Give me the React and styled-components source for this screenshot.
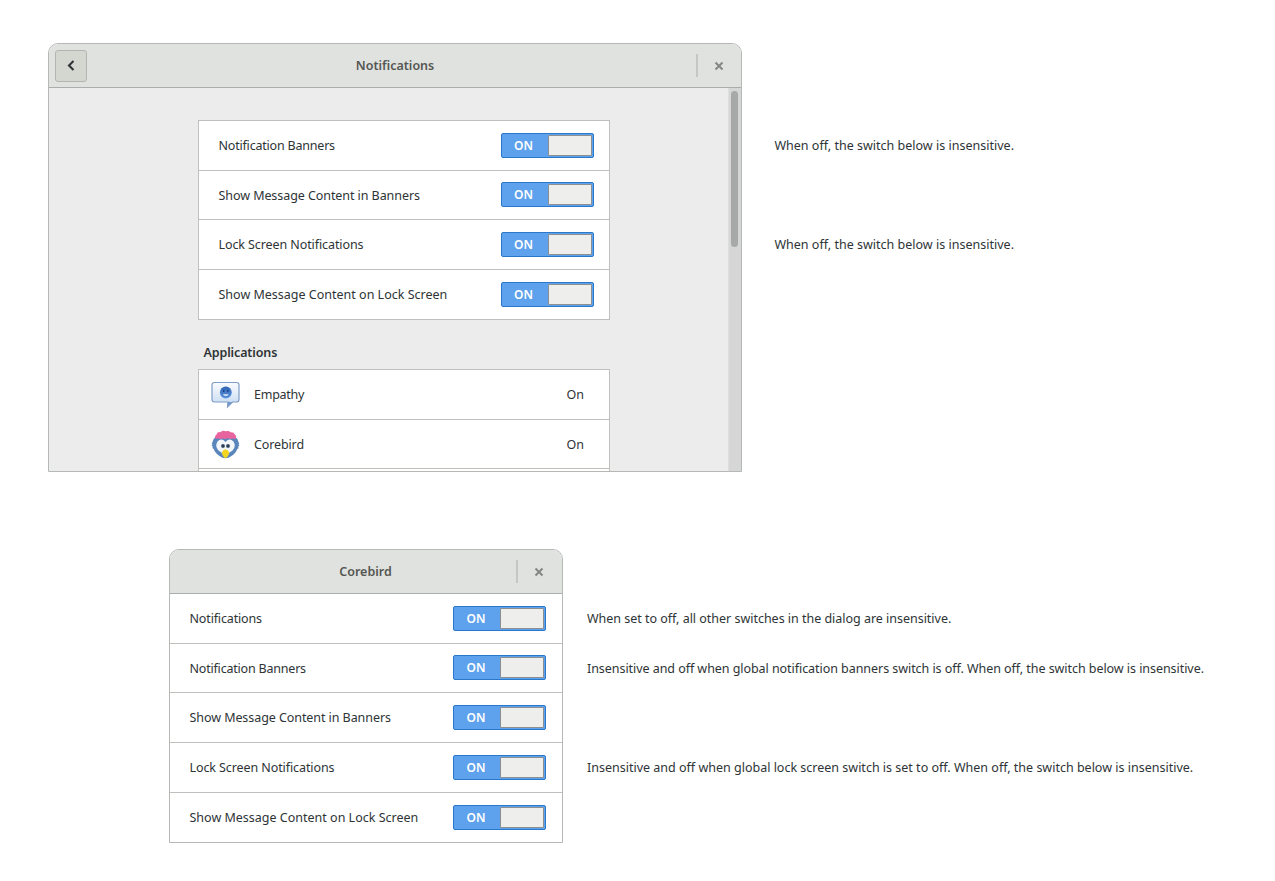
import React from "react";
import styled, { createGlobalStyle } from "styled-components";

const Global = createGlobalStyle`
  * { box-sizing: border-box; }
  body {
    margin: 0;
    background: #fff;
    color: #2e3436;
    font-family: "Noto Sans", "Open Sans", sans-serif;
    font-size: 12.5px;
    line-height: 18px;
  }
`;

const Page = styled.main`
  width: 1275px;
  height: 881px;
  padding-top: 43px;
  overflow: hidden;
`;

const Scene = styled.section`
  display: flex;
  align-items: flex-start;
  margin-left: ${(p) => p.$left}px;
  margin-bottom: 77px;
`;

const Window = styled.div`
  flex: none;
  width: ${(p) => p.$width}px;
  height: ${(p) => p.$height}px;
  display: flex;
  flex-direction: column;
  border: 1px solid #b5b9b5;
  border-radius: 10px 10px 0 0;
  overflow: hidden;
  background: #fff;
`;

const HeaderBar = styled.header`
  flex: none;
  height: 44px;
  display: grid;
  grid-template-columns: 45px 1fr ${(p) => p.$end || 45}px;
  align-items: center;
  background: #e0e2df;
  border-bottom: 1px solid #a9adab;
`;

const Title = styled.h1`
  margin: 0;
  font-size: 12.5px;
  line-height: 18px;
  font-weight: 600;
  text-align: center;
  color: #555753;
`;

const BackButton = styled.button`
  width: 32px;
  height: 32px;
  margin-left: 6px;
  padding: 0;
  display: grid;
  place-items: center;
  border: 1px solid #b3b6b0;
  border-radius: 3px;
  background: #d4d7d0;
`;

const CloseArea = styled.div`
  height: 23px;
  display: grid;
  place-items: center;
  padding-right: 2px;
  border-left: 2px solid #c5c7c4;
`;

const Body = styled.div`
  flex: 1;
  min-height: 0;
  display: flex;
  background: #ececec;
`;

const Content = styled.div`
  flex: 1;
  padding: 32px 0 0 149px;
  overflow: hidden;
`;

const ScrollTrack = styled.div`
  width: 13px;
  padding: 3px 3px 0 2px;
  background: #d6d6d6;
  border-left: 1px solid #dedede;
`;

const ScrollThumb = styled.div`
  width: 7px;
  height: 156px;
  border-radius: 4px;
  background: #a7a9a8;
`;

const Row = styled.div`
  height: 49.67px;
  display: flex;
  align-items: center;
  padding: 0 16px 0 19.5px;
  border-bottom: 1px solid #c0c0bd;
`;

const AppRow = styled(Row)`
  padding: 2px 25px 0 12px;
`;

const List = styled.div`
  width: ${(p) => (p.$framed ? "412px" : "100%")};
  border: ${(p) => (p.$framed ? "1px solid #c0c0bd" : "0")};
  border-bottom: 0;
  background: #fff;

  ${Row}:last-child {
    border-bottom-width: ${(p) => (p.$framed ? 1 : 0)}px;
  }
`;

const Label = styled.span`
  flex: 1;
  padding-top: ${(p) => p.$drop || 0}px;
  white-space: nowrap;
  letter-spacing: ${(p) => p.$track || 0}px;
`;

const SwitchFrame = styled.span`
  width: 93px;
  height: 25px;
  display: flex;
  align-items: center;
  margin-right: ${(p) => p.$shift || 0}px;
  padding: 1px;
  border: 1px solid #2a78cc;
  border-radius: 2px;
  background: #5ea1ec;
`;

const SwitchText = styled.span`
  flex: 1;
  padding: 1px 3px 0 0;
  color: #fff;
  font-size: 12px;
  line-height: 18px;
  font-weight: 600;
  text-align: center;
`;

const Knob = styled.span`
  width: 44px;
  height: 21px;
  border: 1px solid #8b8f90;
  border-radius: 1px;
  background: #eeeeec;
`;

const SectionTitle = styled.h2`
  margin: 24px 0 7.5px 5.5px;
  font-size: 12.5px;
  line-height: 18px;
  font-weight: 600;
  letter-spacing: -0.12px;
`;

const AppIcon = styled.svg`
  flex: none;
  width: 30px;
  height: 30px;
  margin-right: 13px;
`;

const Notes = styled.div`
  margin-left: ${(p) => p.$gap}px;
  padding-top: ${(p) => p.$top}px;
`;

const Note = styled.p`
  height: 49.67px;
  margin: 0;
  display: flex;
  align-items: center;
  white-space: nowrap;
  letter-spacing: ${(p) => p.$track || 0}px;
`;

const CloseIcon = () => (
  <svg width="10" height="10" viewBox="0 0 10 10" fill="none" stroke="#858784" strokeWidth="2">
    <path d="M1.5 1.5 8.5 8.5M8.5 1.5 1.5 8.5" />
  </svg>
);

const Switch = ({ shift }) => (
  <SwitchFrame role="switch" aria-checked="true" $shift={shift}>
    <SwitchText>ON</SwitchText>
    <Knob />
  </SwitchFrame>
);

const EmpathyIcon = () => (
  <AppIcon viewBox="0 0 30 30">
    <defs>
      <linearGradient id="bubble" x2="0" y2="1">
        <stop stopColor="#fafcff" />
        <stop offset="1" stopColor="#c3d8f0" />
      </linearGradient>
      <linearGradient id="face" x2="0" y2="1">
        <stop stopColor="#2f62b0" />
        <stop offset="1" stopColor="#5c9bea" />
      </linearGradient>
    </defs>
    <path
      d="M3.5 2.500h22q2.500 0 2.500 2.500v14.500q0 2.500-2.500 2.500h-4l-5 5 .5-5H3.500Q1 22 1 19.500V5q0-2.500 2.500-2.500z"
      fill="url(#bubble)"
      stroke="#7f9dc6"
      strokeWidth="1.200"
    />
    <path d="M17 22h4.200l-4.500 4.500z" fill="#7396cc" />
    <circle cx="14.800" cy="12.500" r="5.900" fill="url(#face)" />
    <ellipse cx="12.700" cy="11" rx=".8" ry="1.200" fill="#1d4284" />
    <ellipse cx="16.900" cy="11" rx=".8" ry="1.200" fill="#1d4284" />
    <path d="M11.200 13.600h7.200q-.6 3.200-3.600 3.200t-3.600-3.200z" fill="#c3dbfa" stroke="#2d60ab" strokeWidth=".7" />
  </AppIcon>
);

const CorebirdIcon = () => (
  <AppIcon viewBox="0 0 30 30">
    <path
      d="M5 6.500Q1.800 9 1.500 12L.7 13.500l.8.800-.9 1.500 1.200.8-.4 1.700 1.400.6Q4 23 8.500 26q6 4.500 12 0 4.500-3 5.700-7.100l1.400-.6-.4-1.700 1.200-.8-.9-1.500.8-.8-.8-1.500Q27.200 9 24 6.500z"
      fill="#5b86bb"
    />
    <path d="M14.500 12Q10.500 7.500 6.500 11.500 3.500 16.500 7.500 20.500q3 3 7 3t7-3q4-4 1-9-4-4-8 .500z" fill="#f4f7fa" />
    <path d="M4.800 8.800Q3 6.500 5.500 4.500 6.500 1.500 9.500 2.200 12 0 14.500 1.300q3.500-1.200 5 1 3.500-.5 4.300 2.300 2.500 1.900.4 4.600-2.500-1.300-4.700-.2-2.400-1.300-4.900 0-2.600-1.200-4.900 0-2.500-1.100-4.900-.2z" fill="#e8649e" />
    <circle cx="12" cy="16" r="2.200" fill="#aab9c6" />
    <circle cx="17" cy="16" r="2.200" fill="#aab9c6" />
    <circle cx="12" cy="16" r="1.700" fill="#2b3b52" />
    <circle cx="17" cy="16" r="1.700" fill="#2b3b52" />
    <path d="M14.500 19.300q3.500 1.200 3.700 3.900-.5 3-3.700 5.300-3.200-2.300-3.700-5.300.2-2.700 3.700-3.900z" fill="#f3d51f" />
  </AppIcon>
);

const Setting = ({ label, track, shift }) => (
  <Row>
    <Label $track={track} $drop={1.6}>{label}</Label>
    <Switch shift={shift} />
  </Row>
);

export default function App() {
  return (
    <Page>
      <Global />
      <Scene $left={48}>
        <Window $width={694} $height={429}>
          <HeaderBar>
            <BackButton aria-label="Back">
              <svg width="10" height="12" viewBox="0 0 10 12" fill="none" stroke="#2e3436" strokeWidth="2.1">
                <path d="M7.500 1 3 5.500 7.500 10" />
              </svg>
            </BackButton>
            <Title>Notifications</Title>
            <CloseArea><CloseIcon /></CloseArea>
          </HeaderBar>
          <Body>
            <Content>
              <List $framed>
                <Setting label="Notification Banners" track={-0.2} shift={-0.6} />
                <Setting label="Show Message Content in Banners" track={-0.07} shift={-0.6} />
                <Setting label="Lock Screen Notifications" track={-0.09} shift={-0.6} />
                <Setting label="Show Message Content on Lock Screen" shift={-0.6} />
              </List>
              <SectionTitle>Applications</SectionTitle>
              <List $framed>
                <AppRow><EmpathyIcon /><Label $track={-0.25}>Empathy</Label><span>On</span></AppRow>
                <AppRow><CorebirdIcon /><Label $track={-0.12}>Corebird</Label><span>On</span></AppRow>
                <AppRow />
              </List>
            </Content>
            <ScrollTrack><ScrollThumb /></ScrollTrack>
          </Body>
        </Window>
        <Notes $gap={32.4} $top={78}>
          <Note $track={0.01}>When off, the switch below is insensitive.</Note>
          <Note />
          <Note $track={0.01}>When off, the switch below is insensitive.</Note>
        </Notes>
      </Scene>
      <Scene $left={169}>
        <Window $width={394} $height={294}>
          <HeaderBar $end={46}>
            <span />
            <Title>Corebird</Title>
            <CloseArea><CloseIcon /></CloseArea>
          </HeaderBar>
          <List>
            <Setting label="Notifications" track={-0.15} />
            <Setting label="Notification Banners" track={-0.2} />
            <Setting label="Show Message Content in Banners" track={-0.07} />
            <Setting label="Lock Screen Notifications" track={-0.09} />
            <Setting label="Show Message Content on Lock Screen" />
          </List>
        </Window>
        <Notes $gap={24} $top={45.5}>
          <Note $track={-0.02}>When set to off, all other switches in the dialog are insensitive.</Note>
          <Note $track={-0.053}>Insensitive and off when global notification banners switch is off. When off, the switch below is insensitive.</Note>
          <Note />
          <Note>Insensitive and off when global lock screen switch is set to off. When off, the switch below is insensitive.</Note>
        </Notes>
      </Scene>
    </Page>
  );
}
